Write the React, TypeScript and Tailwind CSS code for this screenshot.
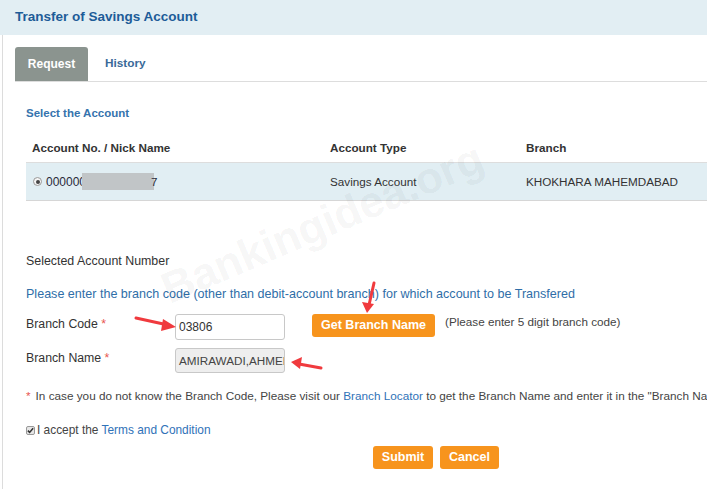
import React from "react";

export default function App() {
  return (
    <div className="relative w-[707px] h-[489px] overflow-hidden bg-white font-['Liberation_Sans',Arial,sans-serif] text-[12px] text-[#333]">
      <div className="h-[35px] bg-[#e2eef3] pl-[15px] flex items-center">
        <span className="text-[13.5px] font-bold text-[#1d5c98]">Transfer of Savings Account</span>
      </div>
      <div className="ml-[2px] border-l border-[#dcdcdc] h-[454px]">
        <div className="pt-[12px] pl-[12px]">
          <div className="flex border-b border-[#dddddd] h-[35px]">
            <div className="w-[73px] h-[34px] bg-[#8b948f] rounded-t-[3px] flex items-center justify-center text-white font-bold">
              Request
            </div>
            <div className="pl-[17px] h-[34px] flex items-center font-bold text-[#3a6a99] text-[11.8px]">History</div>
          </div>
        </div>
        <div className="pl-[23px]">
          <div className="mt-[24px] leading-[14px] font-bold text-[#3573ad] text-[11.5px]">Select the Account</div>
          <div className="mt-[13px] text-[11.7px]">
            <div className="grid grid-cols-[298px_196px_1fr] h-[30px] items-center border-b border-[#dddddd] font-bold text-[#333]">
              <div className="pl-[6px]">Account No. / Nick Name</div>
              <div className="pl-[6px]">Account Type</div>
              <div className="pl-[6px]">Branch</div>
            </div>
            <div className="grid grid-cols-[298px_196px_1fr] h-[38px] items-center bg-[#e1eef3] border-b border-[#d6d6d6] text-[#333]">
              <div className="pl-[7px] flex items-center">
                <span className="w-[9px] h-[9px] rounded-full border border-[#999] bg-[#f4f4f4] flex items-center justify-center mr-[4px]">
                  <span className="w-[4px] h-[4px] rounded-full bg-[#444]"></span>
                </span>
                <span className="text-[#2a2a3a] text-[12px]">000000</span>
                <span className="inline-block w-[72px] h-[17px] bg-[#c1c5c7] -ml-[4px]"></span>
                <span className="-ml-[3px] text-[#2a2a3a]">7</span>
              </div>
              <div className="pl-[6px]">Savings Account</div>
              <div className="pl-[6px]">KHOKHARA MAHEMDABAD</div>
            </div>
          </div>
          <div className="mt-[53px] leading-[14px] text-[12.4px]">Selected Account Number</div>
          <div className="mt-[19px] leading-[14px] text-[#2f6ea8] text-[12.55px] whitespace-nowrap">
            Please enter the branch code (other than debit-account branch) for which account to be Transfered
          </div>
          <div className="mt-[13px] flex items-start h-[26px]">
            <div className="w-[149px] mt-[3px] leading-[14px] text-[#333] text-[12.3px]">
              Branch Code <span className="text-[#e8554e]">*</span>
            </div>
            <div className="w-[110px] h-[26px] border border-[#c8c8c8] rounded-[3px] bg-white pl-[3px] flex items-center text-[#333]">
              03806
            </div>
            <div className="ml-[27px] w-[123px] h-[23px] bg-[#f7941d] rounded-[3px] flex items-center justify-center text-white font-bold text-[12.5px]">
              Get Branch Name
            </div>
            <div className="ml-[10px] mt-[1px] leading-[14px] text-[#444] text-[11.7px]">(Please enter 5 digit branch code)</div>
          </div>
          <div className="mt-[8px] flex items-start h-[25px]">
            <div className="w-[149px] mt-[3px] leading-[14px] text-[#333] text-[12.3px]">
              Branch Name <span className="text-[#e8554e]">*</span>
            </div>
            <div className="w-[110px] h-[25px] border border-[#c8c8c8] rounded-[3px] bg-[#eeeeee] pl-[3px] flex items-center text-[#444] text-[11.7px] overflow-hidden whitespace-nowrap">
              AMIRAWADI,AHMEDABAD
            </div>
          </div>
          <div className="mt-[16px] leading-[14px] whitespace-nowrap text-[#444] text-[11.75px]">
            <span className="text-[#e8554e]">*</span>
            <span className="ml-[5px]">In case you do not know the Branch Code, Please visit our </span>
            <span className="text-[#2f72b8]">Branch Locator</span>
            <span> to get the Branch Name and enter it in the "Branch Name" field</span>
          </div>
          <div className="mt-[20px] flex items-center leading-[14px] text-[11.9px]">
            <span className="w-[9px] h-[9px] rounded-[2px] border border-[#999] bg-[#e6e6e6] flex items-center justify-center mr-[2px]">
              <svg width="7" height="7" viewBox="0 0 8 8">
                <path d="M1 4.2 L3 6.2 L7 1.5" stroke="#333" strokeWidth="1.8" fill="none" />
              </svg>
            </span>
            <span className="text-[#444]">I accept the </span>
            <span className="text-[#2f72b8] ml-[3px]">Terms and Condition</span>
          </div>
          <div className="mt-[9px] pl-[347px] flex gap-[7px]">
            <div className="w-[60px] h-[23px] bg-[#f7941d] rounded-[3px] flex items-center justify-center text-white font-bold text-[12.5px]">
              Submit
            </div>
            <div className="w-[59px] h-[23px] bg-[#f7941d] rounded-[3px] flex items-center justify-center text-white font-bold text-[12.5px]">
              Cancel
            </div>
          </div>
        </div>
      </div>

      <div className="absolute left-[150px] top-[190px] rotate-[-23deg] origin-center text-[44px] font-bold text-[rgba(0,0,0,0.05)] whitespace-nowrap pointer-events-none select-none">
        Bankingidea.org
      </div>

      <svg className="absolute left-0 top-0 pointer-events-none" width="707" height="489">
        <g stroke="#f03a3e" strokeWidth="3" strokeLinecap="round" fill="#f03a3e">
          <line x1="136" y1="318" x2="168" y2="325" />
          <polygon points="176,327 163,319 161,331" stroke="none" />
          <line x1="374" y1="283" x2="369" y2="305" />
          <polygon points="367,313 362,302 374,304" stroke="none" />
          <line x1="321" y1="368" x2="299" y2="364" />
          <polygon points="291,362 302,357 300,369" stroke="none" />
        </g>
      </svg>
    </div>
  );
}
